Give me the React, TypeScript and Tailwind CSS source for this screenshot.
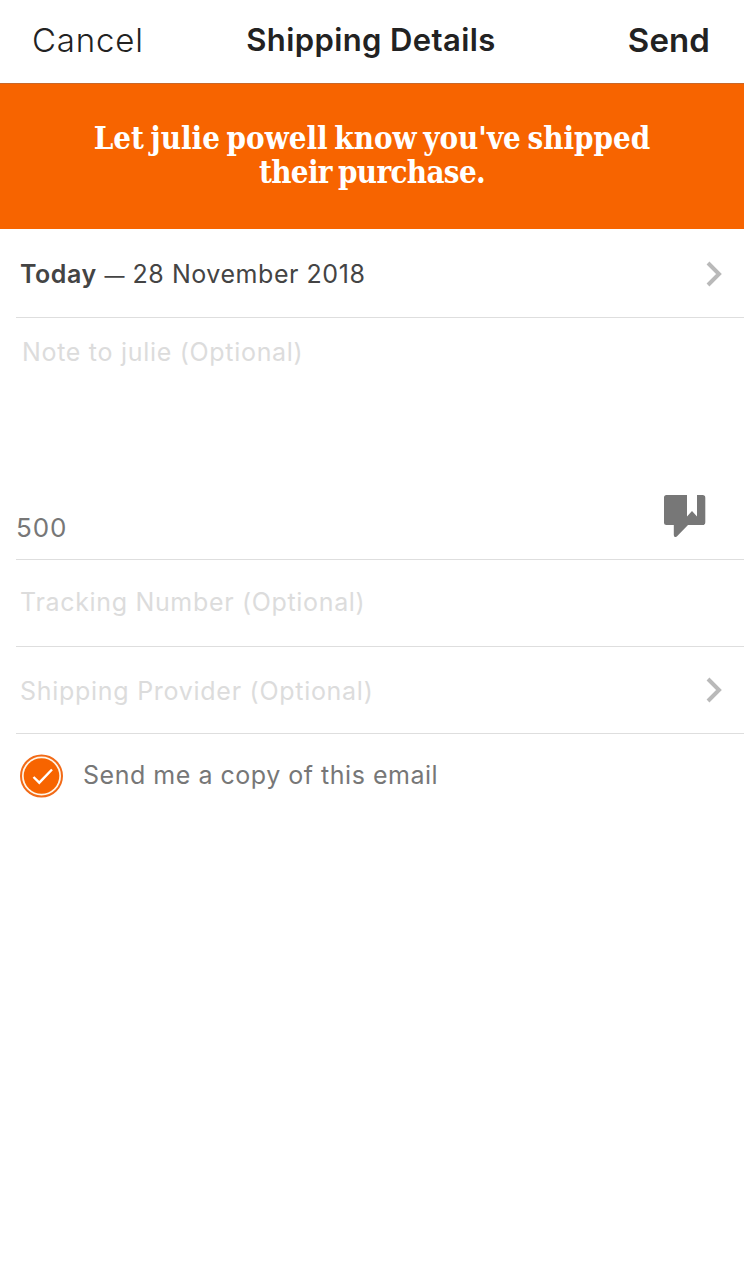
import { useState } from "react";

const NOTE_LIMIT = 500;

function RowChevron() {
  return (
    <svg width="16" height="26" viewBox="0 0 16 26" fill="none" className="shrink-0">
      <path d="M2 2L13 13L2 24" stroke="#b9b9b9" strokeWidth="4" />
    </svg>
  );
}

function SnippetIcon() {
  return (
    <svg width="42" height="43" viewBox="0 0 42 43" fill="#777777">
      <path d="M2.5 0H23V21.5L28 16L33 21.5V0H38.5Q41.3 0 41.3 2.8V27.2Q41.3 30 38.5 30H24L12.8 41.5Q9.8 43 9.8 40V30H2.5Q0 30 0 27.5V2.5Q0 0 2.5 0Z" />
    </svg>
  );
}

export default function App() {
  const [note, setNote] = useState("");
  const [tracking, setTracking] = useState("");
  const [sendCopy, setSendCopy] = useState(true);

  return (
    <div className="min-h-screen bg-white font-[Inter,sans-serif] text-[25px] text-[#777777]">
      {/* Header */}
      <header className="flex h-[83px] items-center justify-between pl-8 pr-[34px] pb-[2px] text-[#222222]">
        <button className="w-[160px] text-left text-[33px] font-light tracking-[0.8px]">Cancel</button>
        <h1 className="whitespace-nowrap text-[31px] font-semibold tracking-[0.4px]">Shipping Details</h1>
        <button className="w-[160px] text-right text-[33px] font-semibold tracking-[0.1px]">Send</button>
      </header>

      {/* Banner */}
      <section className="h-[146px] border-t border-[#c8682a] bg-[#f76400] pt-[37px] text-center">
        <p className="font-['DejaVu_Serif_Condensed','DejaVu_Serif',serif] text-[31px] font-bold leading-[34px] tracking-[-0.65px] text-white [word-spacing:-3px]">
          <span className="tracking-[0px]">Let julie powell know you've shipped</span>
          <br />
          their purchase.
        </p>
      </section>

      {/* Form */}
      <form className="pl-4" onSubmit={(e) => e.preventDefault()}>
        <button type="button" className="flex h-[89px] w-full items-center justify-between border-b border-[#dedede] pl-1 pr-[22px] pt-[2px] text-left text-[#444444]">
          <span className="pt-[2px] tracking-[0.55px]">
            <span className="font-semibold">Today</span> <span className="text-[20px]">—</span> 28 November 2018
          </span>
          <RowChevron />
        </button>

        <div className="flex h-[242px] flex-col border-b border-[#dedede]">
          <textarea
            value={note}
            maxLength={NOTE_LIMIT}
            onChange={(e) => setNote(e.target.value)}
            placeholder="Note to julie (Optional)"
            className="block min-h-0 flex-1 resize-none pl-1.5 pt-[14px] leading-10 tracking-[0.7px] text-[#444444] outline-none placeholder:text-[#dcdcdc]"
          />
          <div className="flex h-[64px] items-start justify-between pr-[38px]">
            <span className="pt-[13px] text-[26px] tracking-[0.9px]">{NOTE_LIMIT - note.length}</span>
            <button type="button" aria-label="Snippets">
              <SnippetIcon />
            </button>
          </div>
        </div>

        <div className="flex h-[87px] items-center border-b border-[#dedede] pl-1">
          <input
            type="text"
            value={tracking}
            onChange={(e) => setTracking(e.target.value)}
            placeholder="Tracking Number (Optional)"
            className="w-full tracking-[0.67px] text-[#444444] outline-none placeholder:text-[#dcdcdc]"
          />
        </div>

        <button type="button" className="flex h-[87px] w-full items-center justify-between border-b border-[#dedede] pl-1 pr-[22px] text-left">
          <span className="pt-[3px] tracking-[0.72px] text-[#dcdcdc]">Shipping Provider (Optional)</span>
          <RowChevron />
        </button>

        <button type="button" onClick={() => setSendCopy(!sendCopy)} className="flex h-[84px] w-full items-center gap-5 pl-1 text-left">
          <svg width="43" height="44" viewBox="0 0 43 44" fill="none" className="shrink-0">
            <circle cx="21.5" cy="22" r="20.5" fill="#fff6e8" stroke="#f26a17" strokeWidth="2" />
            {sendCopy && <circle cx="21.5" cy="22" r="17.8" fill="#f76400" />}
            {sendCopy && <path d="M13.5 23L19.3 28.7L32 15.5" stroke="white" strokeWidth="2.4" />}
          </svg>
          <span className="tracking-[0.52px]">Send me a copy of this email</span>
        </button>
      </form>
    </div>
  );
}
